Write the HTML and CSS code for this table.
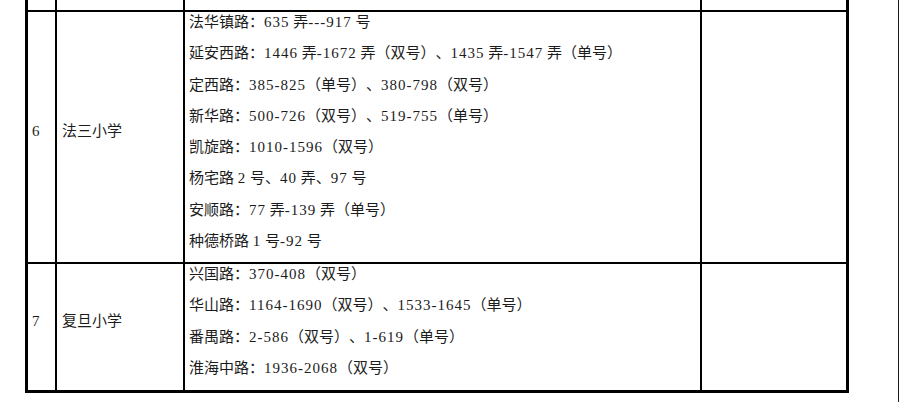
FILE: index.html
```html
<!DOCTYPE html>
<html lang="zh-CN">
<head>
<meta charset="utf-8">
<title>学区地段表</title>
<link rel="stylesheet" href="styles.css">
</head>
<body>
<div class="page">
  <table class="grid">
    <colgroup>
      <col class="c-no">
      <col class="c-name">
      <col class="c-addr">
      <col class="c-note">
    </colgroup>
    <tr class="prev">
      <td></td><td></td><td></td><td class="last"></td>
    </tr>
    <tr class="row-a">
      <td class="mid"><div class="line"><span class="n">6</span></div></td>
      <td class="mid"><div class="line">法三小学</div></td>
      <td>
        <div class="line">法华镇路：<span class="n">635</span> 弄<span class="n">---917</span> 号</div>
        <div class="line">延安西路：<span class="n">1446</span> 弄<span class="n">-1672</span> 弄（双号）、<span class="n">1435</span> 弄<span class="n">-1547</span> 弄（单号）</div>
        <div class="line">定西路：<span class="n">385-825</span>（单号）、<span class="n">380-798</span>（双号）</div>
        <div class="line">新华路：<span class="n">500-726</span>（双号）、<span class="n">519-755</span>（单号）</div>
        <div class="line">凯旋路：<span class="n">1010-1596</span>（双号）</div>
        <div class="line">杨宅路 <span class="n">2</span> 号、<span class="n">40</span> 弄、<span class="n">97</span> 号</div>
        <div class="line">安顺路：<span class="n">77</span> 弄<span class="n">-139</span> 弄（单号）</div>
        <div class="line">种德桥路 <span class="n">1</span> 号<span class="n">-92</span> 号</div>
      </td>
      <td class="last"></td>
    </tr>
    <tr class="row-b">
      <td class="mid"><div class="line"><span class="n">7</span></div></td>
      <td class="mid"><div class="line">复旦小学</div></td>
      <td>
        <div class="line">兴国路：<span class="n">370-408</span>（双号）</div>
        <div class="line">华山路：<span class="n">1164-1690</span>（双号）、<span class="n">1533-1645</span>（单号）</div>
        <div class="line">番禺路：<span class="n">2-586</span>（双号）、<span class="n">1-619</span>（单号）</div>
        <div class="line">淮海中路：<span class="n">1936-2068</span>（双号）</div>
      </td>
      <td class="last"></td>
    </tr>
  </table>
</div>
</body>
</html>
```

FILE: styles.css
```css
html, body {
  margin: 0;
  padding: 0;
  background: #ffffff;
}

.page {
  width: 898px;
  height: 402px;
  border-right: 1px solid #1a1a1a;
  overflow: hidden;
  font-family: "Liberation Serif", "Noto Sans CJK SC", serif;
  font-size: 15px;
  color: #1c1c1c;
  text-spacing-trim: space-all;
}

.grid {
  margin-left: 25px;
  border-collapse: separate;
  border-spacing: 0;
  table-layout: fixed;
  width: 824px;
  border-left: 3px solid #000;
  border-right: 3px solid #000;
  border-bottom: 3px solid #000;
}

.c-no { width: 29px; }
.c-name { width: 128px; }
.c-addr { width: 517px; }
.c-note { width: 144px; }

.grid td {
  box-sizing: border-box;
  padding: 0 0 0 4px;
  vertical-align: top;
  border-right: 2px solid #000;
  border-bottom: 2px solid #000;
}

.grid td.last {
  border-right: none;
}

.grid td.mid {
  vertical-align: middle;
}

.grid td:nth-child(2) {
  padding-left: 5px;
}

.row-b td {
  border-bottom: none;
}

.prev td {
  height: 12px;
  padding: 0;
}

.row-a td {
  height: 252px;
}

.row-b td {
  height: 126px;
}

.line {
  padding-top: 1px;
  line-height: 18px;
  padding-bottom: 12.25px;
  white-space: nowrap;
  text-spacing-trim: space-all;
}

.n {
  font-size: 15px;
  letter-spacing: 1px;
}
```
